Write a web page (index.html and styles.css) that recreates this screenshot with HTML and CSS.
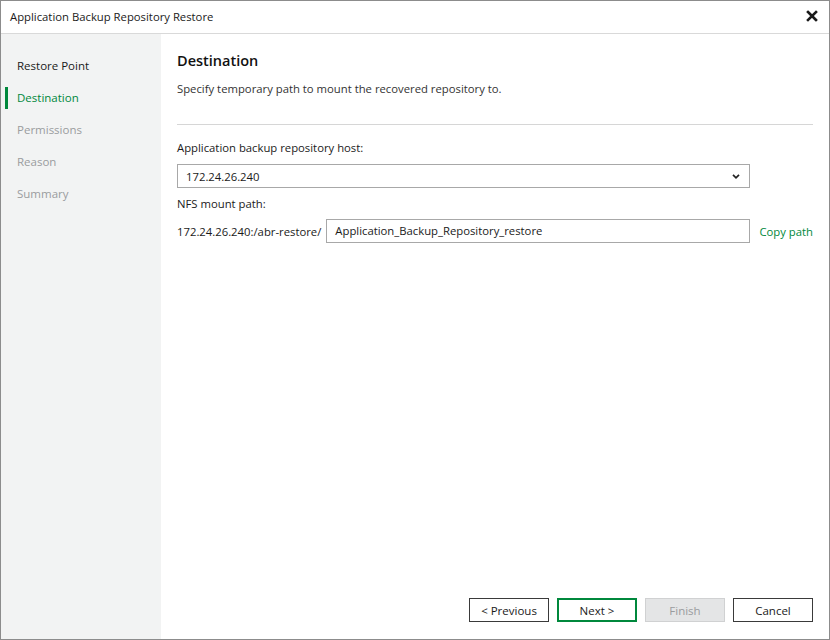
FILE: index.html
```html
<!DOCTYPE html>
<html>
<head>
<meta charset="utf-8">
<link rel="stylesheet" href="styles.css">
</head>
<body>
<div class="window">
  <div class="titlebar">
    <span class="title">Application Backup Repository Restore</span>
    <svg class="close" width="12" height="12" viewBox="0 0 12 12"><path d="M2 2 L10 10 M10 2 L2 10" stroke="#1a1a1a" stroke-width="2.6" stroke-linecap="square"/></svg>
  </div>
  <div class="main">
    <nav class="sidebar">
      <div class="step done">Restore Point</div>
      <div class="step active">Destination</div>
      <div class="step">Permissions</div>
      <div class="step">Reason</div>
      <div class="step">Summary</div>
    </nav>
    <section class="content">
      <h1 class="heading">Destination</h1>
      <p class="subtitle">Specify temporary path to mount the recovered repository to.</p>
      <div class="separator"></div>
      <div class="label first">Application backup repository host:</div>
      <div class="select">
        <span>172.24.26.240</span>
        <svg class="chevron" width="8" height="5" viewBox="0 0 8 5"><path d="M1 0.8 L4 3.8 L7 0.8" fill="none" stroke="#222" stroke-width="1.7"/></svg>
      </div>
      <div class="label">NFS mount path:</div>
      <div class="pathrow">
        <span class="prefix">172.24.26.240:/abr-restore/</span>
        <div class="input">Application_Backup_Repository_restore</div>
        <span class="link">Copy path</span>
      </div>
      <div class="spacer"></div>
      <div class="buttons">
        <div class="btn">&lt; Previous</div>
        <div class="btn primary">Next &gt;</div>
        <div class="btn disabled">Finish</div>
        <div class="btn">Cancel</div>
      </div>
    </section>
  </div>
</div>
</body>
</html>
```

FILE: styles.css
```css
* { box-sizing: border-box; }
html, body { margin: 0; padding: 0; background: #fff; }
body {
  font-family: "Open Sans", "Noto Sans", sans-serif;
  font-size: 11.3px;
  color: #1a1a1a;
}
.window {
  width: 830px;
  height: 640px;
  border: 1px solid #8c8c8c;
  display: flex;
  flex-direction: column;
  background: #fff;
}
.titlebar {
  height: 33px;
  flex: none;
  border-bottom: 1px solid #d9d9d9;
  display: flex;
  align-items: center;
  justify-content: space-between;
  padding: 0 11px 2px 9px;
}
.title { font-size: 11.3px; }
.close { display: block; }
.main { flex: 1; display: flex; min-height: 0; }
.sidebar {
  width: 160px;
  flex: none;
  background: #f2f3f3;
  padding-top: 16px;
}
.step {
  height: 32px;
  line-height: 32px;
  padding-left: 16px;
  color: #9a9c9e;
  position: relative;
  font-size: 11.5px;
}
.step.done { color: #1a1a1a; }
.step.active { color: #00883c; }
.step.active::before {
  content: "";
  position: absolute;
  left: 4px;
  top: 5px;
  width: 3px;
  height: 22px;
  background: #00883c;
}
.content {
  flex: 1;
  display: flex;
  flex-direction: column;
  padding: 17px 16px 17px 16px;
}
.heading {
  margin: 0;
  font-size: 14.5px;
  font-weight: 600;
  line-height: 20px;
  color: #111;
}
.subtitle {
  margin: 10px 0 0 0;
  line-height: 16px;
  color: #333;
}
.separator {
  margin-top: 27px;
  height: 1px;
  background: #d6d6d6;
}
.label {
  line-height: 16px;
  margin-top: 8px;
  color: #1a1a1a;
}
.label.first { margin-top: 15px; }
.select {
  margin-top: 8px;
  width: 573px;
  height: 24px;
  border: 1px solid #a8a8a8;
  display: flex;
  align-items: center;
  justify-content: space-between;
  padding: 0 9px 0 8px;
}
.chevron { display: block; }
.pathrow {
  margin-top: 7px;
  display: flex;
  align-items: center;
}
.prefix { flex: none; white-space: nowrap; margin-right: 5px; }
.input {
  flex: 1;
  height: 24px;
  border: 1px solid #a8a8a8;
  line-height: 22px;
  padding-left: 8px;
}
.link {
  flex: none;
  margin-left: 9px;
  color: #00883c;
  white-space: nowrap;
}
.spacer { flex: 1; }
.buttons {
  display: flex;
  justify-content: flex-end;
  gap: 8px;
}
.btn {
  width: 80px;
  height: 24px;
  border: 1px solid #3a3a3a;
  display: flex;
  align-items: center;
  justify-content: center;
  font-size: 11.5px;
  color: #1a1a1a;
  background: #fff;
}
.btn.primary { border: 2px solid #00883c; }
.btn.disabled { background: #e4e5e6; border-color: #d0d1d2; color: #9a9c9e; }
```
